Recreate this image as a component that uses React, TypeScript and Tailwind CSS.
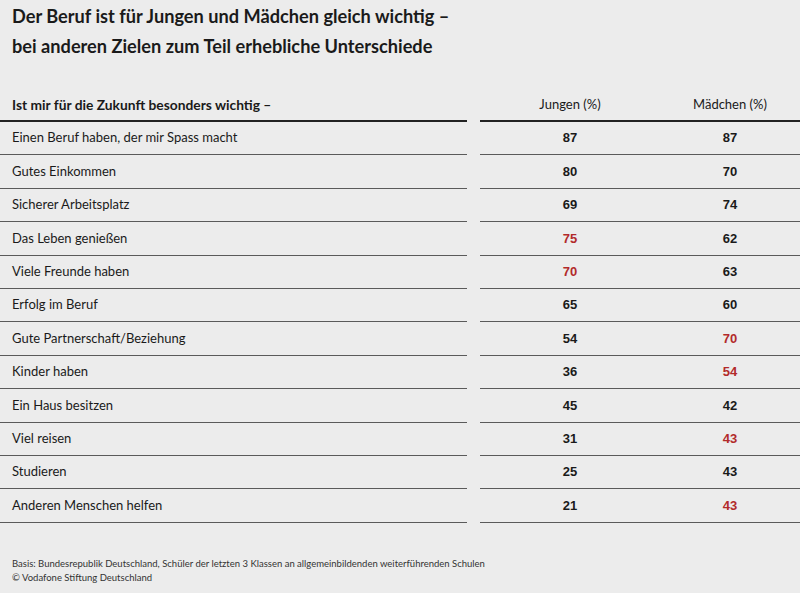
const rows: [string, number, number, 'j' | 'm' | null][] = [
  ['Einen Beruf haben, der mir Spass macht', 87, 87, null],
  ['Gutes Einkommen', 80, 70, null],
  ['Sicherer Arbeitsplatz', 69, 74, null],
  ['Das Leben genießen', 75, 62, 'j'],
  ['Viele Freunde haben', 70, 63, 'j'],
  ['Erfolg im Beruf', 65, 60, null],
  ['Gute Partnerschaft/Beziehung', 54, 70, 'm'],
  ['Kinder haben', 36, 54, 'm'],
  ['Ein Haus besitzen', 45, 42, null],
  ['Viel reisen', 31, 43, 'm'],
  ['Studieren', 25, 43, null],
  ['Anderen Menschen helfen', 21, 43, 'm'],
]

export default function App() {
  return (
    <div className="h-[593px] w-[800px] overflow-hidden bg-[#ececec] text-[#1a1a1a] [font-family:Lato,sans-serif]">
      <h1 className="px-[12px] pt-[1px] text-[18.2px] font-bold leading-[30px]">
        Der Beruf ist für Jungen und Mädchen gleich wichtig –<br />
        bei anderen Zielen zum Teil erhebliche Unterschiede
      </h1>

      <div className="mt-[25px]">
        <div className="flex h-[36px] items-center">
          <div className="h-full w-[467px] border-b-2 border-[#222] pl-[12px] pt-[9px] text-[13.8px] font-bold">
            Ist mir für die Zukunft besonders wichtig –
          </div>
          <div className="ml-[13px] flex h-full flex-1 border-b-2 border-[#222] pt-[9px] text-[13px]">
            <div className="w-[180px] text-center">Jungen (%)</div>
            <div className="w-[140px] text-center">Mädchen (%)</div>
          </div>
        </div>
        {rows.map(([label, j, m, hi]) => (
          <div key={label} className="flex h-[33.4px]">
            <div className="flex w-[467px] items-center border-b-[1.5px] border-[#5a5a5a] pl-[12px] text-[13px]">
              {label}
            </div>
            <div className="ml-[13px] flex flex-1 items-center border-b-[1.5px] border-[#5a5a5a] text-[13px] font-bold [font-family:'Liberation_Sans',sans-serif]">
              <div className={`w-[180px] text-center ${hi === 'j' ? 'text-[#b22a2a]' : ''}`}>{j}</div>
              <div className={`w-[140px] text-center ${hi === 'm' ? 'text-[#b22a2a]' : ''}`}>{m}</div>
            </div>
          </div>
        ))}
      </div>

      <div className="mt-[34px] pl-[12px] text-[9.5px] leading-[14px] text-[#333]">
        Basis: Bundesrepublik Deutschland, Schüler der letzten 3 Klassen an allgemeinbildenden weiterführenden Schulen
        <br />© Vodafone Stiftung Deutschland
      </div>
    </div>
  )
}
